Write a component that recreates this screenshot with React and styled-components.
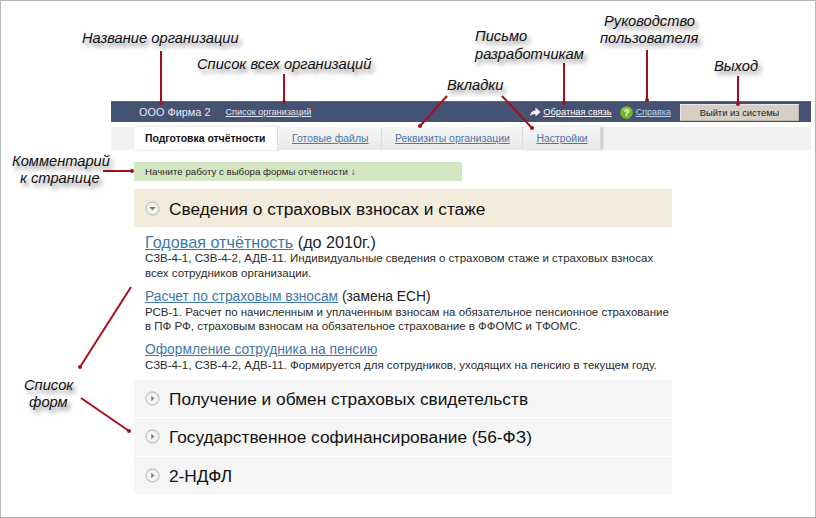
import React from "react";
import styled, { createGlobalStyle } from "styled-components";

const GlobalStyle = createGlobalStyle`
  html, body {
    margin: 0;
    padding: 0;
    background: #fff;
  }
  body {
    font-family: "Liberation Sans", Arial, sans-serif;
  }
`;

const tabs = [
  { title: "Подготовка отчётности", active: true },
  { title: "Готовые файлы" },
  { title: "Реквизиты организации" },
  { title: "Настройки" },
];

const forms = [
  {
    title: "Годовая отчётность",
    note: "(до 2010г.)",
    large: true,
    text: "СЗВ-4-1, СЗВ-4-2, АДВ-11. Индивидуальные сведения о страховом стаже и страховых взносах всех сотрудников организации.",
  },
  {
    title: "Расчет по страховым взносам",
    note: "(замена ЕСН)",
    text: "РСВ-1. Расчет по начисленным и уплаченным взносам на обязательное пенсионное страхование в ПФ РФ, страховым взносам на обязательное страхование в ФФОМС и ТФОМС.",
  },
  {
    title: "Оформление сотрудника на пенсию",
    text: "СЗВ-4-1, СЗВ-4-2, АДВ-11. Формируется для сотрудников, уходящих на пенсию в текущем году.",
  },
];

const closedSections = [
  "Получение и обмен страховых свидетельств",
  "Государственное софинансирование (56-ФЗ)",
  "2-НДФЛ",
];

const labels = [
  { x: 81, y: 29, text: "Название организации" },
  { x: 196, y: 55, text: "Список всех организаций" },
  { x: 474, y: 27, text: "Письмо" },
  { x: 474, y: 45, text: "разработчикам" },
  { x: 603, y: 12, text: "Руководство" },
  { x: 599, y: 29, text: "пользователя" },
  { x: 713, y: 57, text: "Выход" },
  { x: 446, y: 76, text: "Вкладки" },
  { x: 11, y: 152, text: "Комментарий" },
  { x: 19, y: 169, text: "к странице" },
  { x: 23, y: 376, text: "Список" },
  { x: 28, y: 393, text: "форм" },
];

// [x1, y1, x2, y2]
const arrows = [
  [161, 51, 161, 103],
  [284, 74, 284, 102],
  [564, 63, 564, 103],
  [647, 50, 647, 100],
  [738, 76, 738, 104],
  [447, 96, 420, 126],
  [502, 96, 532, 128],
  [103, 171, 132, 171],
  [131, 287, 80, 367],
  [81, 398, 129, 431],
];

const Arrows = () => (
  <ArrowLayer viewBox="0 0 816 518" width="816" height="518">
    {arrows.map(([x1, y1, x2, y2], index) => (
      <g key={index}>
        <line x1={x1} y1={y1} x2={x2} y2={y2} stroke="#a3101f" strokeWidth="2" />
        <circle cx={x2} cy={y2} r="2" fill="#a3101f" />
      </g>
    ))}
  </ArrowLayer>
);

const SectionIcon = ({ open }) => (
  <svg width="15" height="15" viewBox="0 0 18 18">
    <circle cx="9" cy="9" r="7.8" fill="#f4f4f4" stroke="#c8c8c8" strokeWidth="1.6" />
    {open ? (
      <path d="M5.200 7.200h7.600L9 11.500z" fill="#7a7a7a" />
    ) : (
      <path d="M7.500 5.800v6.400L11.300 9z" fill="#7a7a7a" />
    )}
  </svg>
);

const FeedbackIcon = () => (
  <svg width="12" height="12" viewBox="0 0 12 12">
    <path d="M6.500 1.500 11.500 6l-5 4.500V8C4 8 2.300 8.700.800 10.500 1.200 7 3.200 4.600 6.500 4.200z" fill="#eef0f5" />
  </svg>
);

const HelpIcon = () => (
  <svg width="13" height="13" viewBox="0 0 14 14">
    <circle cx="7" cy="7" r="6.800" fill="#73b52a" />
    <path d="M2 5.500a5.200 4.500 0 0 1 10 0c-3-1.200-7-1.200-10 0z" fill="#a4d65e" />
    <text x="7" y="10.500" textAnchor="middle" fontSize="10" fontWeight="700" fill="#fff" fontFamily="Liberation Sans">?</text>
  </svg>
);

const App = () => (
  <Frame>
    <GlobalStyle />
    <TopBar>
      <OrgName>ООО Фирма 2</OrgName>
      <OrgLink href="#">Список организаций</OrgLink>
      <BarRight>
        <FeedbackIcon />
        <FeedbackLink href="#">Обратная связь</FeedbackLink>
        <HelpIcon />
        <HelpLink href="#">Справка</HelpLink>
        <LogoutButton>Выйти из системы</LogoutButton>
      </BarRight>
    </TopBar>
    <TabStrip>
      {tabs.map((tab) => (
        <Tab key={tab.title} $active={tab.active}>
          {tab.title}
        </Tab>
      ))}
    </TabStrip>
    <Content>
      <Comment>Начните работу с выбора формы отчётности ↓</Comment>
      <OpenSection>
        <SectionIcon open />
        <SectionTitle>Сведения о страховых взносах и стаже</SectionTitle>
      </OpenSection>
      <FormList>
        {forms.map((form) => (
          <FormItem key={form.title}>
            <FormTitle $large={form.large}>
              <FormLink href="#">{form.title}</FormLink>
              {form.note && ` ${form.note}`}
            </FormTitle>
            <FormText>{form.text}</FormText>
          </FormItem>
        ))}
      </FormList>
      <ClosedList>
        {closedSections.map((title) => (
          <ClosedSection key={title}>
            <SectionIcon />
            <SectionTitle>{title}</SectionTitle>
          </ClosedSection>
        ))}
      </ClosedList>
    </Content>
    <Arrows />
    {labels.map((label) => (
      <Callout key={label.text} style={{ left: label.x, top: label.y }}>
        {label.text}
      </Callout>
    ))}
  </Frame>
);

const Frame = styled.div`
  position: relative;
  box-sizing: border-box;
  width: 816px;
  height: 518px;
  padding: 100px 4px 0 110px;
  border: 1px solid #b5b5b5;
  overflow: hidden;
`;

const TopBar = styled.div`
  display: flex;
  align-items: center;
  box-sizing: border-box;
  height: 21px;
  padding-left: 28px;
  background: #465273;
  border-top: 1px solid #5b6478;
  color: #e6e8ef;
`;

const OrgName = styled.span`
  font-size: 10.900px;
  margin-right: 15px;
`;

const OrgLink = styled.a`
  font-size: 9.100px;
  color: #e6e8ef;
`;

const BarRight = styled.div`
  display: flex;
  align-items: center;
  margin-left: auto;
`;

const FeedbackLink = styled.a`
  font-size: 9.300px;
  color: #fff;
  margin: 0 8px 0 2px;
`;

const HelpLink = styled.a`
  font-size: 9px;
  color: #c3d2ec;
  margin: 0 9px 0 3px;
`;

const LogoutButton = styled.button`
  box-sizing: border-box;
  width: 119px;
  height: 17px;
  padding: 0;
  margin-right: 12px;
  border: 1px solid #ebe7e0;
  border-right-color: #b8b3aa;
  border-bottom-color: #b8b3aa;
  background: #d6cfc5;
  color: #222;
  font-family: inherit;
  font-size: 9.400px;
`;

const TabStrip = styled.div`
  display: flex;
  height: 23px;
  margin-top: 5px;
  padding-left: 23px;
  background: #f1f1f1;
`;

const Tab = styled.div`
  display: flex;
  align-items: center;
  box-sizing: border-box;
  padding: ${({ $active }) => ($active ? "0 12px 0 11px" : "0 12px 0 13.500px")};
  font-size: 10.450px;
  font-weight: ${({ $active }) => ($active ? 700 : 400)};
  color: ${({ $active }) => ($active ? "#111" : "#4f77a5")};
  text-decoration: ${({ $active }) => ($active ? "none" : "underline")};
  background: ${({ $active }) =>
    $active ? "#fff" : "linear-gradient(#f6f6f6, #e6e8ea)"};
  border-right: 1px solid #dcdcdc;

  &:nth-child(1),
  &:nth-child(4) {
    box-shadow: 2px 0 2px #c8c8c8;
  }
`;

const Content = styled.div`
  width: 538px;
  margin: 12px 0 0 23px;
`;

const Comment = styled.div`
  display: flex;
  align-items: center;
  box-sizing: border-box;
  width: 328px;
  height: 19px;
  padding-left: 11px;
  background: #d3e6c3;
  color: #2a2a2a;
  font-size: 9.700px;
`;

const OpenSection = styled.div`
  display: flex;
  align-items: center;
  gap: 9px;
  height: 38px;
  margin-top: 8px;
  padding-left: 11px;
  background: #f3ecdd;
`;

const SectionTitle = styled.div`
  padding-top: 2px;
  font-size: 17.300px;
  color: #111;
`;

const FormList = styled.div`
  display: flex;
  flex-direction: column;
  gap: 7.500px;
  padding: 6px 0 7px 11px;
`;

const FormItem = styled.div``;

const FormTitle = styled.div`
  font-size: ${({ $large }) => ($large ? "16.200px" : "13.800px")};
  line-height: ${({ $large }) => ($large ? "18px" : "17px")};
  color: #222;
`;

const FormLink = styled.a`
  color: #3f78a8;
`;

const FormText = styled.div`
  font-size: 11.500px;
  line-height: 14.500px;
  color: #2a2a2a;
`;

const ClosedList = styled.div`
  display: flex;
  flex-direction: column;
  gap: 1px;
`;

const ClosedSection = styled.div`
  display: flex;
  align-items: center;
  gap: 9px;
  height: 37.500px;
  padding-left: 11px;
  background: #f5f5f5;
`;

const ArrowLayer = styled.svg`
  position: absolute;
  left: -1px;
  top: -1px;
  pointer-events: none;
`;

const Callout = styled.div`
  position: absolute;
  font-size: 14.700px;
  font-style: italic;
  line-height: 17px;
  white-space: nowrap;
  color: #111;
  text-shadow: 3px 4px 4px rgba(0, 0, 0, 0.45);
`;

export default App;
